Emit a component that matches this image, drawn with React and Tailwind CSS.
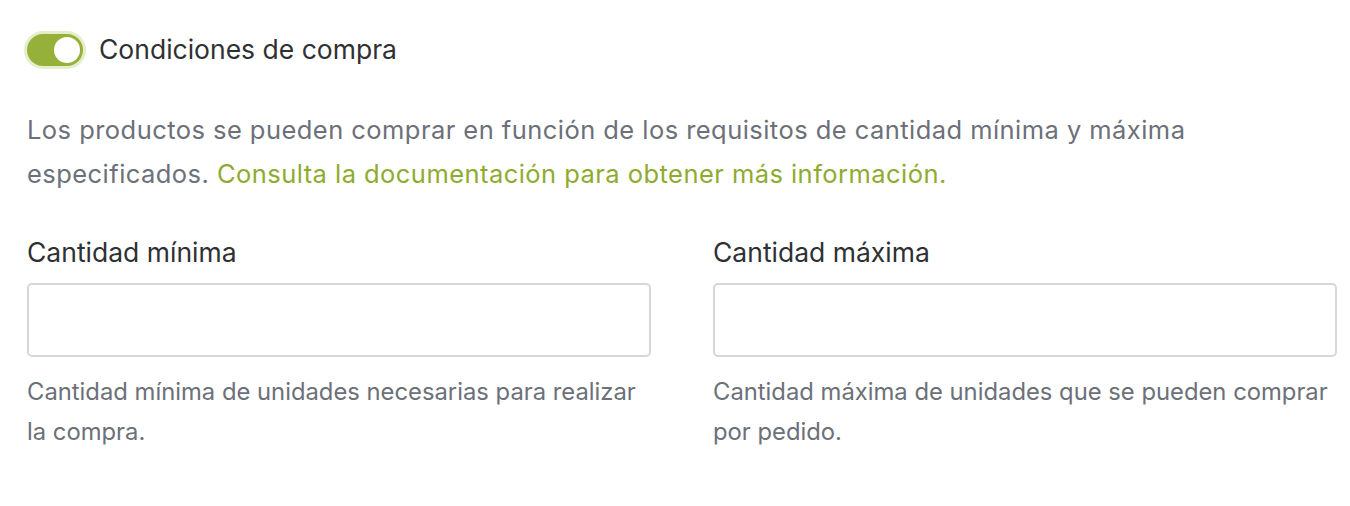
import React from "react";

export default function App() {
  return (
    <div className="w-[1350px] h-[506px] bg-white pl-[27px] pr-[13px] pt-[30px]" style={{ fontFamily: "Inter, sans-serif" }}>
      <div className="flex items-center gap-[16px] h-[40px]">
        <div className="w-[56px] h-[32px] rounded-full bg-[#96b13a] ring-[3px] ring-[#e5edcb] flex items-center justify-end pr-[3px]">
          <div className="w-[26px] h-[26px] rounded-full bg-white" />
        </div>
        <span className="text-[26.5px] text-[#2f3033]">Condiciones de compra</span>
      </div>
      <p className="mt-[38px] text-[25.5px] tracking-[0.45px] leading-[44px] text-[#6c7079]">
        Los productos se pueden comprar en función de los requisitos de cantidad mínima y máxima especificados.{" "}
        <span className="text-[#8fab2f]">Consulta la documentación para obtener más información.</span>
      </p>
      <div className="mt-[40px] grid grid-cols-2 gap-[62px]">
        {[
          ["Cantidad mínima", "Cantidad mínima de unidades necesarias para realizar la compra."],
          ["Cantidad máxima", "Cantidad máxima de unidades que se pueden comprar por pedido."],
        ].map(([label, help]) => (
          <div key={label}>
            <div className="text-[26.5px] leading-[32px] text-[#2f3033]">{label}</div>
            <div className="mt-[15px] h-[74px] rounded-[5px] border-2 border-[#d6d7d9] bg-white" />
            <div className="mt-[15px] text-[23.8px] leading-[40px] text-[#6c7079]">{help}</div>
          </div>
        ))}
      </div>
    </div>
  );
}
